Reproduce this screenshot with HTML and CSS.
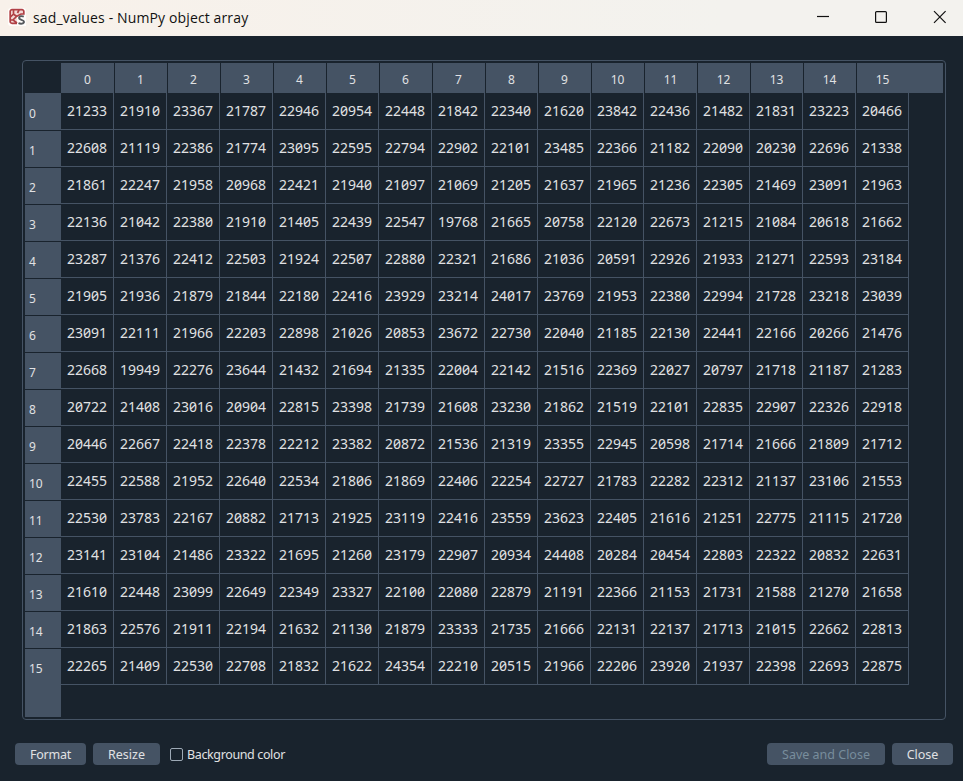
FILE: index.html
```
<!DOCTYPE html>
<html lang="en">
<head>
<meta charset="utf-8">
<title>sad_values - NumPy object array</title>
<link rel="stylesheet" href="styles.css">
</head>
<body>
<header class="titlebar">
  <svg class="logo" width="18" height="18" viewBox="0 0 18 18">
    <rect width="18" height="18" rx="3" fill="#fffdfb"/>
    <rect x="1.500" y="1" width="15" height="15" rx="2" fill="#f3d9d7"/>
    <path d="M9 7h9v11H9z" fill="#fffdfb"/>
    <path d="M9 15.300H4a1.800 1.800 0 0 1-1.800-1.800v-10A1.800 1.800 0 0 1 4 1.700h10a1.800 1.800 0 0 1 1.800 1.800v3.300M5.500 2v4l-3 3M5.500 6l3 2.500L13 6h2.500M8.500 8.500L5 12l4 3M11 2L9.500 5M3 12h2" fill="none" stroke="#b04045" stroke-width="1.700"/>
    <path d="M15.800 8.700C14 7.800 11 8 11 10s5 1.600 5 3.800c0 2.200-3.500 2.200-5.500 1.300" fill="none" stroke="#56585c" stroke-width="1.900"/>
  </svg>
  <h1 class="title">sad_values - NumPy object array</h1>
  <svg class="controls" width="130" height="14" viewBox="0 0 130 14" fill="none" stroke="#111" stroke-width="1.200">
    <path d="M0 6.500h12"/>
    <rect x="58.600" y="1.600" width="10.800" height="10.800" rx="1"/>
    <path d="M117 1.200l11.600 11.600M128.600 1.200L117 12.800"/>
  </svg>
</header>
<main class="frame">
  <div class="corner"></div>
  <div class="col-heads" id="cols"></div>
  <div class="row-heads" id="rows"></div>
  <div class="cells" id="cells"></div>
</main>
<footer class="actions">
  <button class="btn format">Format</button>
  <button class="btn resize">Resize</button>
  <label class="check"><span class="box"></span>Background color</label>
  <button class="btn save" disabled>Save and Close</button>
  <button class="btn close">Close</button>
</footer>
<script src="table.js"></script>
</body>
</html>
```
FILE: styles.css
```
* { box-sizing: border-box; }
body {
  margin: 0;
  width: 963px;
  height: 781px;
  overflow: hidden;
  background: #19232d;
  color: #e0e1e3;
  font-family: "Noto Sans", "Open Sans", sans-serif;
  font-size: 12px;
}
.titlebar {
  height: 36px;
  display: flex;
  align-items: center;
  padding: 0 16px 2px 8px;
  background: linear-gradient(90deg, #f8f1ea, #f3f2ee 75%);
  color: #111;
}
.logo { flex: none; }
.title {
  margin: 2px auto 0 7px;
  font: 400 14px/20px "Open Sans", sans-serif;
  letter-spacing: 0.13px;
  white-space: nowrap;
}
.controls { flex: none; }
.frame {
  width: 924px;
  height: 660px;
  margin: 24px 0 0 22px;
  padding: 2px;
  border: 1px solid #455364;
  border-radius: 4px;
  display: grid;
  grid-template-columns: 36px 882px;
  grid-template-rows: 30px 624px;
}
.col-heads { display: flex; background: #455364; }
.col-head {
  width: 53px;
  line-height: 34px;
  text-align: center;
}
.col-head + .col-head { border-left: 1px solid #19232d; padding-right: 1px; }
.row-heads { background: #455364; }
.row-head {
  height: 37px;
  padding-left: 4px;
  line-height: 42px;
}
.row-head + .row-head { border-top: 1px solid #19232d; line-height: 40px; }
.cells {
  display: grid;
  grid-template-columns: repeat(16, 53px);
  grid-auto-rows: 37px;
  align-content: start;
  font-size: 14px;
  font-feature-settings: "zero" 1;
}
.cell {
  padding-left: 6px;
  line-height: 36px;
  border-right: 1px solid #455364;
  border-bottom: 1px solid #455364;
}
.actions {
  display: flex;
  align-items: center;
  height: 22px;
  margin: 23px 10px 0 15px;
}
.btn {
  height: 22px;
  padding: 1px 0 0;
  border: 0;
  border-radius: 4px;
  background: #455364;
  color: #e0e1e3;
  font: 12.500px/21px "Noto Sans", sans-serif;
}
.btn:disabled { color: #788d9c; }
.format { width: 71px; letter-spacing: -0.2px; }
.resize { width: 67px; margin-left: 7px; }
.check {
  display: flex;
  align-items: center;
  gap: 4px;
  margin: 0 auto 0 10px;
  font-size: 12.500px;
  letter-spacing: -0.37px;
  white-space: nowrap;
}
.box {
  width: 13px;
  height: 13px;
  border: 1px solid #9da9b5;
  border-radius: 2px;
}
.save { width: 118px; }
.close { width: 61px; margin-left: 7px; }
```
FILE: table.js
```
const values = `
21233 21910 23367 21787 22946 20954 22448 21842 22340 21620 23842 22436 21482 21831 23223 20466
22608 21119 22386 21774 23095 22595 22794 22902 22101 23485 22366 21182 22090 20230 22696 21338
21861 22247 21958 20968 22421 21940 21097 21069 21205 21637 21965 21236 22305 21469 23091 21963
22136 21042 22380 21910 21405 22439 22547 19768 21665 20758 22120 22673 21215 21084 20618 21662
23287 21376 22412 22503 21924 22507 22880 22321 21686 21036 20591 22926 21933 21271 22593 23184
21905 21936 21879 21844 22180 22416 23929 23214 24017 23769 21953 22380 22994 21728 23218 23039
23091 22111 21966 22203 22898 21026 20853 23672 22730 22040 21185 22130 22441 22166 20266 21476
22668 19949 22276 23644 21432 21694 21335 22004 22142 21516 22369 22027 20797 21718 21187 21283
20722 21408 23016 20904 22815 23398 21739 21608 23230 21862 21519 22101 22835 22907 22326 22918
20446 22667 22418 22378 22212 23382 20872 21536 21319 23355 22945 20598 21714 21666 21809 21712
22455 22588 21952 22640 22534 21806 21869 22406 22254 22727 21783 22282 22312 21137 23106 21553
22530 23783 22167 20882 21713 21925 23119 22416 23559 23623 22405 21616 21251 22775 21115 21720
23141 23104 21486 23322 21695 21260 23179 22907 20934 24408 20284 20454 22803 22322 20832 22631
21610 22448 23099 22649 22349 23327 22100 22080 22879 21191 22366 21153 21731 21588 21270 21658
21863 22576 21911 22194 21632 21130 21879 23333 21735 21666 22131 22137 21713 21015 22662 22813
22265 21409 22530 22708 21832 21622 24354 22210 20515 21966 22206 23920 21937 22398 22693 22875
`.trim().split(/\s+/);

function fill(id, className, items) {
  const parent = document.getElementById(id);
  for (const item of items) {
    const el = document.createElement("div");
    el.className = className;
    el.textContent = item;
    parent.append(el);
  }
}

const indexes = Array.from({ length: 16 }, (_, i) => i);
fill("cols", "col-head", indexes);
fill("rows", "row-head", indexes);
fill("cells", "cell", values);
```
